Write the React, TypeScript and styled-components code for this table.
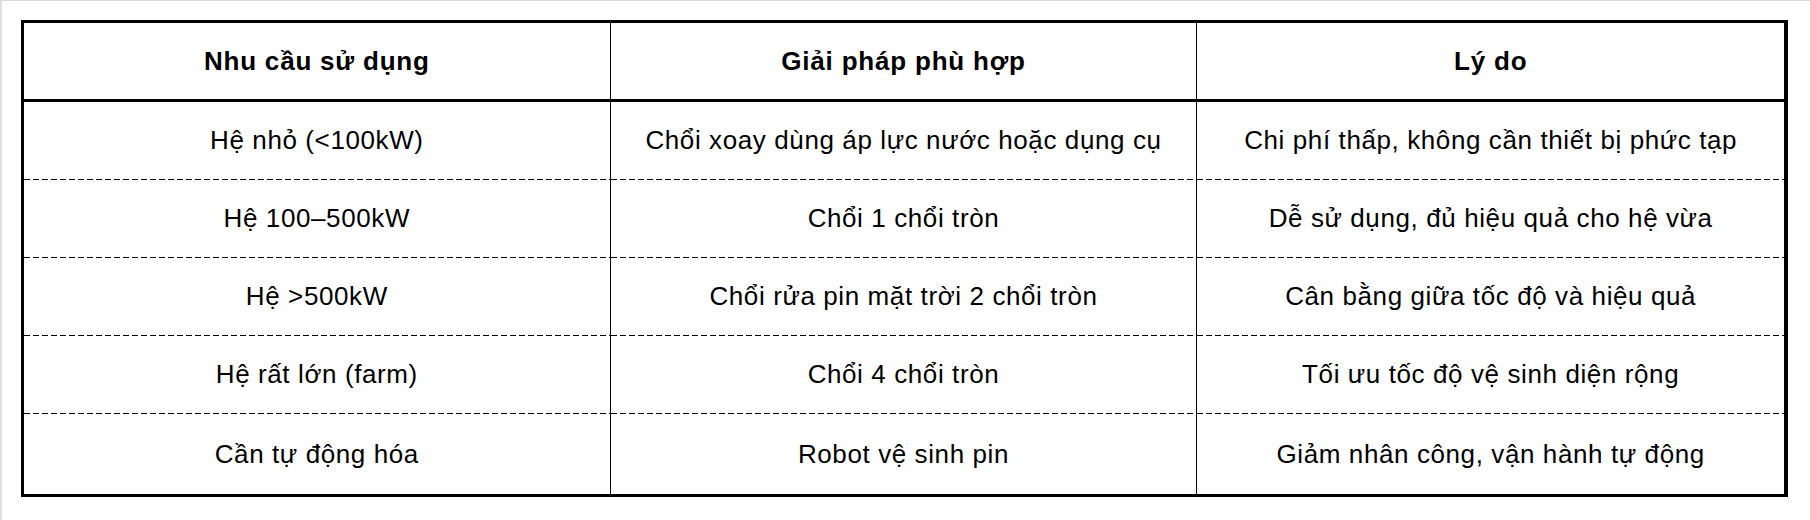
import React from "react";
import styled, { createGlobalStyle } from "styled-components";

const rows = [
  ["Hệ nhỏ (<100kW)", "Chổi xoay dùng áp lực nước hoặc dụng cụ", "Chi phí thấp, không cần thiết bị phức tạp"],
  ["Hệ 100–500kW", "Chổi 1 chổi tròn", "Dễ sử dụng, đủ hiệu quả cho hệ vừa"],
  ["Hệ >500kW", "Chổi rửa pin mặt trời 2 chổi tròn", "Cân bằng giữa tốc độ và hiệu quả"],
  ["Hệ rất lớn (farm)", "Chổi 4 chổi tròn", "Tối ưu tốc độ vệ sinh diện rộng"],
  ["Cần tự động hóa", "Robot vệ sinh pin", "Giảm nhân công, vận hành tự động"],
];

const App: React.FC = () => {
  return (
    <Page>
      <GlobalStyle />
      <Table>
        <thead>
          <tr>
            <HeadCell>Nhu cầu sử dụng</HeadCell>
            <HeadCell>Giải pháp phù hợp</HeadCell>
            <HeadCell>Lý do</HeadCell>
          </tr>
        </thead>
        <tbody>
          {rows.map((r, i) => (
            <tr key={i}>
              {r.map((c, j) => (
                <Cell key={j} $last={i === rows.length - 1}>
                  {c}
                </Cell>
              ))}
            </tr>
          ))}
        </tbody>
      </Table>
    </Page>
  );
};

const GlobalStyle = createGlobalStyle`
  html, body {
    margin: 0;
    padding: 0;
    background: #fff;
  }
  body {
    font-family: "Liberation Sans", Arial, sans-serif;
    color: #000;
  }
`;

const Page = styled.div`
  box-sizing: border-box;
  width: 1810px;
  height: 520px;
  border-top: 1px solid #d9d9d9;
  border-left: 2px solid #dedede;
  padding: 19px 0 0 19px;
`;

const Table = styled.table`
  width: 1767px;
  table-layout: fixed;
  border-collapse: separate;
  border-spacing: 0;
  border: 3px solid #000;
  border-right-width: 4px;
`;

const HeadCell = styled.th`
  height: 79px;
  padding: 0;
  font-size: 26px;
  font-weight: bold;
  letter-spacing: 0.8px;
  text-align: center;
  vertical-align: middle;
  border-bottom: 3px solid #000;
  border-right: 1px solid #000;
  box-sizing: border-box;

  &:last-child {
    border-right: none;
  }
`;

// dashed rule under every row except the last one
const Cell = styled.td<{ $last: boolean }>`
  height: ${(p) => (p.$last ? 80 : 78)}px;
  padding: 0 0 ${(p) => (p.$last ? 0 : 1)}px;
  font-size: 26px;
  letter-spacing: 0.6px;
  text-align: center;
  vertical-align: middle;
  border-right: 1px solid #000;
  box-sizing: border-box;
  background: ${(p) =>
    p.$last
      ? "none"
      : "repeating-linear-gradient(to right, #000 0 6px, transparent 6px 9px) left bottom / 100% 1px no-repeat"};

  &:last-child {
    border-right: none;
  }
`;

export default App;
